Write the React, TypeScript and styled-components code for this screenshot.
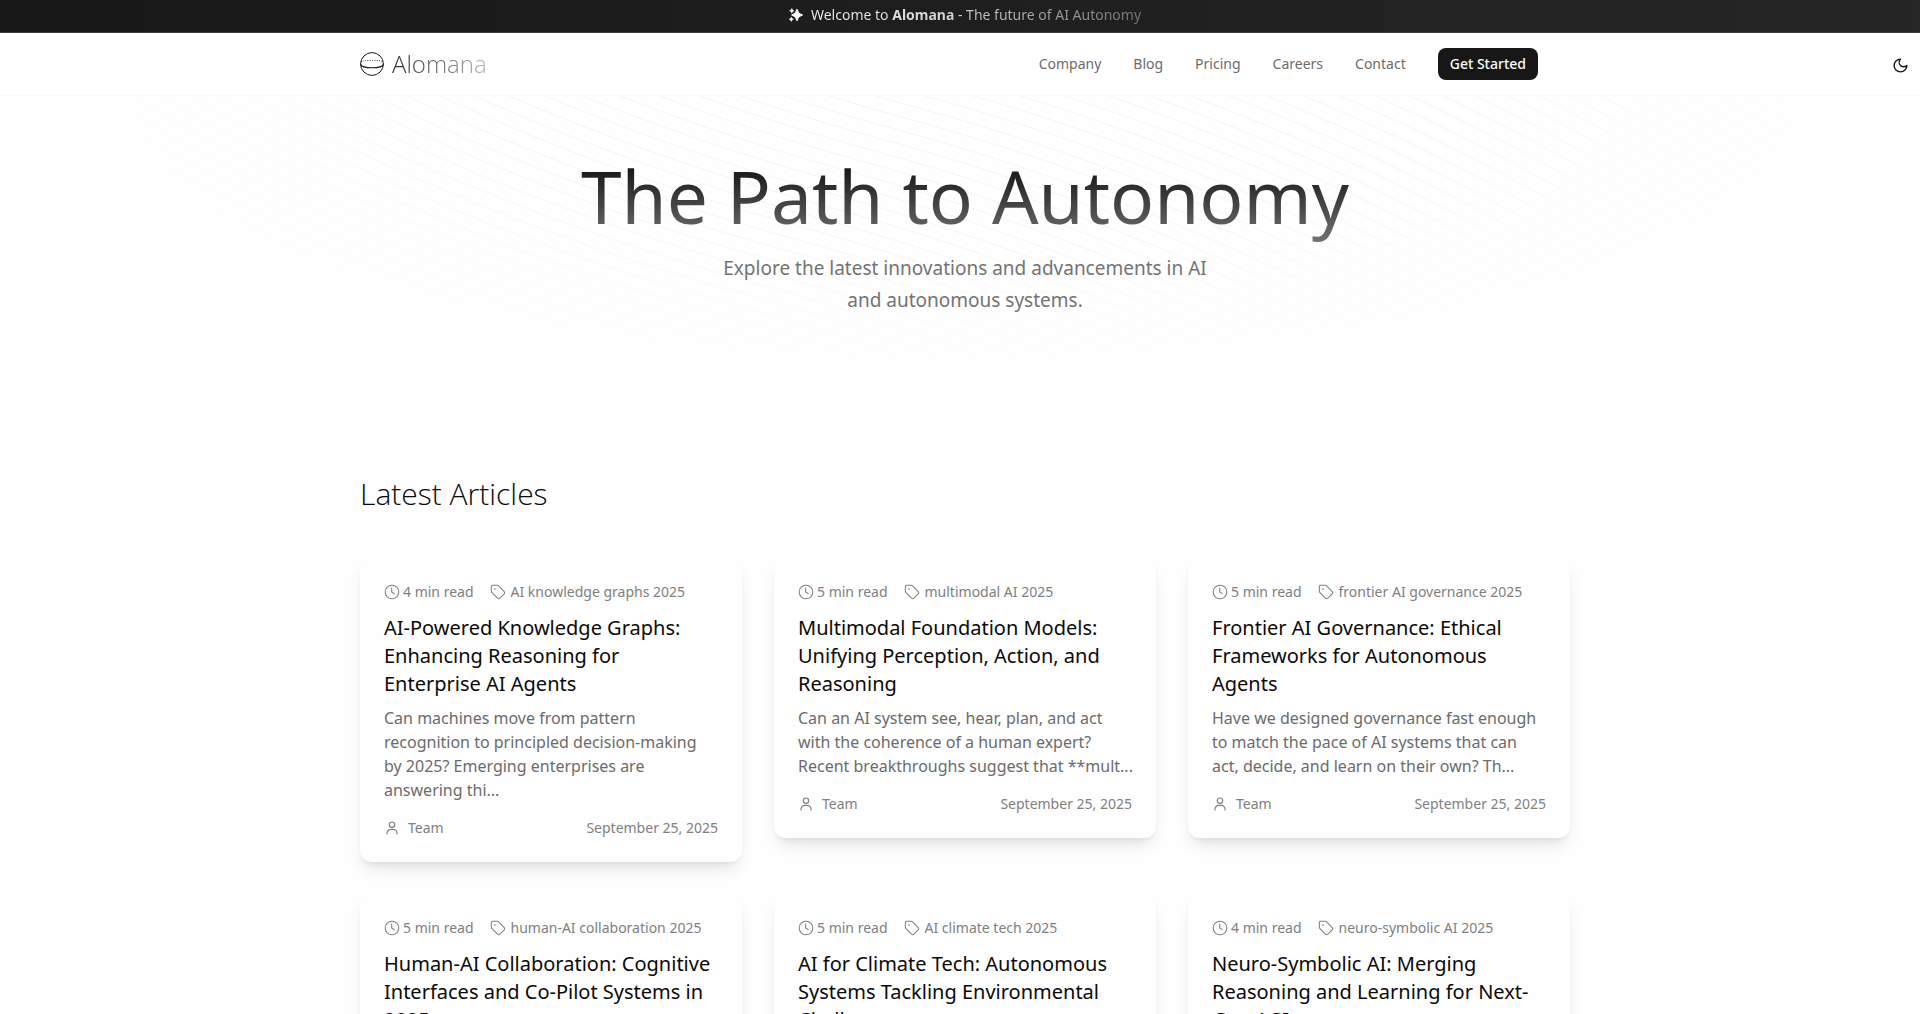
import React from "react";
import styled, { createGlobalStyle } from "styled-components";

const GlobalStyle = createGlobalStyle`
  *, *::before, *::after { box-sizing: border-box; }
  body {
    margin: 0;
    overflow-x: hidden;
    background: #fefefe;
    color: #0a0a0a;
    font-family: "Noto Sans", "Open Sans", sans-serif;
    font-size: 16px;
    line-height: 24px;
  }
  h1, h2, h3, p { margin: 0; font-weight: 400; }
  a { color: inherit; text-decoration: none; }
`;

const Page = styled.div`
  width: calc(100% + 10px);
`;

const Announcement = styled.div`
  display: flex;
  justify-content: center;
  align-items: center;
  gap: 8px;
  height: 33px;
  padding-bottom: 2px;
  background: linear-gradient(90deg, #171717, #262626);
  border-bottom: 1px solid #404040;
  font-size: 14px;
  line-height: 20px;
`;

const AnnouncementText = styled.p`
  color: transparent;
  background: linear-gradient(90deg, #f5f5f5, #d4d4d4 40%, #737373);
  background-clip: text;
  -webkit-background-clip: text;
`;

const Header = styled.header`
  position: relative;
  background: #fff;
  border-bottom: 1px solid #fafafa;
`;

const Container = styled.div`
  width: 100%;
  max-width: 1210px;
  margin: 0 auto;
`;

const HeaderInner = styled(Container)`
  display: flex;
  align-items: center;
  justify-content: space-between;
  height: 62px;
  padding-right: 32px;
`;

const Brand = styled.a`
  display: flex;
  align-items: center;
  gap: 8px;
`;

const BrandName = styled.span`
  font-family: "Open Sans", "Noto Sans", sans-serif;
  font-size: 24px;
  line-height: 32px;
  font-weight: 300;
  color: transparent;
  background: linear-gradient(90deg, #262626, #b4b4b4);
  background-clip: text;
  -webkit-background-clip: text;
`;

const Nav = styled.nav`
  display: flex;
  align-items: center;
  gap: 32px;
  font-size: 14px;
  line-height: 20px;
  color: #6b6b6b;
`;

const PrimaryButton = styled.button`
  height: 32px;
  padding: 0 12px;
  border: 0;
  border-radius: 8px;
  background: #171717;
  color: #fafafa;
  font: 500 14px/20px "Noto Sans", "Open Sans", sans-serif;
`;

const ThemeToggle = styled.button`
  position: absolute;
  top: 16px;
  right: 14px;
  display: grid;
  place-items: center;
  width: 32px;
  height: 32px;
  padding: 0;
  border: 0;
  background: none;
  color: #171717;
`;

const Hero = styled.section`
  position: relative;
  display: flex;
  flex-direction: column;
  align-items: center;
  gap: 10px;
  height: 340px;
  padding-top: 54px;
  text-align: center;
`;

const Waves = styled.svg`
  position: absolute;
  top: 0;
  left: 0;
  width: 100%;
  height: 260px;
  mask-image: radial-gradient(ellipse 860px 270px at 50% 0, #000 55%, transparent);
`;

const HeroTitle = styled.h1`
  position: relative;
  font-size: 73px;
  line-height: 92px;
  color: transparent;
  background: linear-gradient(180deg, #171717 20%, #737373);
  background-clip: text;
  -webkit-background-clip: text;
`;

const HeroText = styled.p`
  position: relative;
  max-width: 512px;
  font-size: 19px;
  line-height: 32px;
  color: #737373;
`;

const SectionTitle = styled.h2`
  margin: 38px 0 44px;
  font-family: "Open Sans", "Noto Sans", sans-serif;
  font-size: 30px;
  line-height: 40px;
  font-weight: 300;
`;

const Grid = styled.div`
  display: grid;
  grid-template-columns: repeat(3, 1fr);
  align-items: start;
  gap: 32px;
  padding-bottom: 64px;
`;

const Card = styled.article`
  padding: 24px;
  border-radius: 12px;
  background: #fefefe;
  box-shadow: 0 10px 15px -3px rgba(0, 0, 0, 0.1), 0 4px 6px -4px rgba(0, 0, 0, 0.1);
`;

const Meta = styled.div`
  display: flex;
  gap: 16px;
  font-size: 14px;
  line-height: 20px;
  color: #808080;
`;

const MetaItem = styled.span<{ $gap: number }>`
  display: flex;
  align-items: center;
  gap: ${(p) => p.$gap}px;
`;

const CardTitle = styled.h3`
  margin: 12px 0 8px;
  font-size: 20px;
  line-height: 28px;
  color: #0a0a0a;
`;

const CardText = styled.p`
  margin: 0 -8px 16px 0;
  white-space: pre-line;
  color: #6b6b6b;
`;

const CardFooter = styled(Meta)`
  justify-content: space-between;
`;

const waveLines = Array.from({ length: 76 }, (_, i) => i - 38);

function HeroWaves() {
  return (
    <Waves viewBox="-965 0 1930 260" preserveAspectRatio="xMidYMin slice" aria-hidden="true">
      <g fill="none" stroke="#000" strokeOpacity="0.045">
        {waveLines.map((k) => (
          <path
            key={k}
            transform={`translate(${k * 10 - 40} ${k * -11})`}
            d="M-1474-1474C-1474-1474-1285-352 0 0C1285 352 1474 1474 1474 1474"
          />
        ))}
      </g>
    </Waves>
  );
}

const Sparkles = () => (
  <svg width="14" height="14" viewBox="0 0 14 14" fill="#fff" aria-hidden="true">
    <path d="M8 1.2Q8.9 6.1 13.6 7Q8.9 7.9 8 12.8Q7.1 7.9 2.6 7Q7.1 6.1 8 1.2Z" stroke="#fff" strokeWidth="1" strokeLinejoin="round" />
    <path d="M2.8 .4Q3.2 2.4 5.1 2.8Q3.2 3.2 2.8 5.2Q2.4 3.2.5 2.8Q2.4 2.4 2.8.4Z" stroke="#fff" strokeWidth=".5" />
    <path d="M2.3 9Q2.7 10.8 4.5 11.2Q2.7 11.6 2.3 13.4Q1.9 11.6.1 11.2Q1.9 10.8 2.3 9Z" stroke="#fff" strokeWidth=".5" />
  </svg>
);

const Logo = () => (
  <svg width="24" height="24" viewBox="0 0 24 24" fill="none" stroke="#171717" aria-hidden="true">
    <circle cx="12" cy="12" r="11.4" strokeWidth="1" />
    <path d="M.6 12.500C2 16.800 22 16.800 23.400 12.500" strokeWidth="1.2" />
    <path d="M.8 10C3 7.800 21 7.800 23.200 10" strokeWidth=".8" strokeDasharray="1 1.3" />
  </svg>
);

const lineIcon = {
  viewBox: "0 0 24 24",
  fill: "none",
  stroke: "currentColor",
  strokeLinecap: "round",
  strokeLinejoin: "round",
  "aria-hidden": true,
} as const;

const MoonIcon = () => (
  <svg {...lineIcon} width="17" height="17" strokeWidth="2">
    <path d="M12 3a6 6 0 0 0 9 9 9 9 0 1 1-9-9Z" />
  </svg>
);

const ClockIcon = () => (
  <svg {...lineIcon} width="16" height="16" strokeWidth="1.6">
    <circle cx="12" cy="12" r="10.2" />
    <path d="M11.500 6v6l4 2.500" />
  </svg>
);

const TagIcon = () => (
  <svg {...lineIcon} width="16" height="16" strokeWidth="1.6">
    <path d="M12.600 2.600A2 2 0 0 0 11.200 2H4a2 2 0 0 0-2 2v7.200a2 2 0 0 0 .6 1.400l8.700 8.700a2.400 2.400 0 0 0 3.400 0l6.600-6.600a2.400 2.400 0 0 0 0-3.400Z" />
    <circle cx="7.500" cy="7.500" r=".5" fill="currentColor" />
  </svg>
);

const UserIcon = () => (
  <svg {...lineIcon} width="16" height="16" strokeWidth="1.8">
    <circle cx="12" cy="7" r="4" />
    <path d="M4.500 21v-1a6 6 0 0 1 6-6h3a6 6 0 0 1 6 6v1" />
  </svg>
);

type Article = { minutes: number; tag: string; title: string; text?: string };

const articles: Article[] = [
  {
    minutes: 4,
    tag: "AI knowledge graphs 2025",
    title: "AI-Powered Knowledge Graphs: Enhancing Reasoning for Enterprise AI Agents",
    text: "Can machines move from pattern\nrecognition to principled decision-making\nby 2025? Emerging enterprises are\nanswering thi...",
  },
  {
    minutes: 5,
    tag: "multimodal AI 2025",
    title: "Multimodal Foundation Models: Unifying Perception, Action, and Reasoning",
    text: "Can an AI system see, hear, plan, and act\nwith the coherence of a human expert?\nRecent breakthroughs suggest that **mult...",
  },
  {
    minutes: 5,
    tag: "frontier AI governance 2025",
    title: "Frontier AI Governance: Ethical Frameworks for Autonomous Agents",
    text: "Have we designed governance fast enough\nto match the pace of AI systems that can\nact, decide, and learn on their own? Th...",
  },
  {
    minutes: 5,
    tag: "human-AI collaboration 2025",
    title: "Human-AI Collaboration: Cognitive Interfaces and Co-Pilot Systems in 2025",
  },
  {
    minutes: 5,
    tag: "AI climate tech 2025",
    title: "AI for Climate Tech: Autonomous Systems Tackling Environmental Challenges",
  },
  {
    minutes: 4,
    tag: "neuro-symbolic AI 2025",
    title: "Neuro-Symbolic AI: Merging Reasoning and Learning for Next-Gen AGI",
  },
];

const navLinks = ["Company", "Blog", "Pricing", "Careers", "Contact"];

export default function App() {
  return (
    <Page>
      <GlobalStyle />
      <Announcement>
        <Sparkles />
        <AnnouncementText>
          Welcome to <strong>Alomana</strong> - The future of AI Autonomy
        </AnnouncementText>
      </Announcement>
      <Header>
        <HeaderInner>
          <Brand href="#">
            <Logo />
            <BrandName>Alomana</BrandName>
          </Brand>
          <Nav>
            {navLinks.map((label) => (
              <a key={label} href="#">
                {label}
              </a>
            ))}
            <PrimaryButton type="button">Get Started</PrimaryButton>
          </Nav>
        </HeaderInner>
        <ThemeToggle type="button" aria-label="Toggle theme">
          <MoonIcon />
        </ThemeToggle>
      </Header>
      <main>
        <Hero>
          <HeroWaves />
          <HeroTitle>The Path to Autonomy</HeroTitle>
          <HeroText>Explore the latest innovations and advancements in AI and autonomous systems.</HeroText>
        </Hero>
        <Container>
          <SectionTitle>Latest Articles</SectionTitle>
          <Grid>
            {articles.map((a) => (
              <Card key={a.title}>
                <Meta>
                  <MetaItem $gap={3}>
                    <ClockIcon />
                    {a.minutes} min read
                  </MetaItem>
                  <MetaItem $gap={5}>
                    <TagIcon />
                    {a.tag}
                  </MetaItem>
                </Meta>
                <CardTitle>{a.title}</CardTitle>
                {a.text && <CardText>{a.text}</CardText>}
                <CardFooter>
                  <MetaItem $gap={8}>
                    <UserIcon />
                    Team
                  </MetaItem>
                  <time dateTime="2025-09-25">September 25, 2025</time>
                </CardFooter>
              </Card>
            ))}
          </Grid>
        </Container>
      </main>
    </Page>
  );
}
